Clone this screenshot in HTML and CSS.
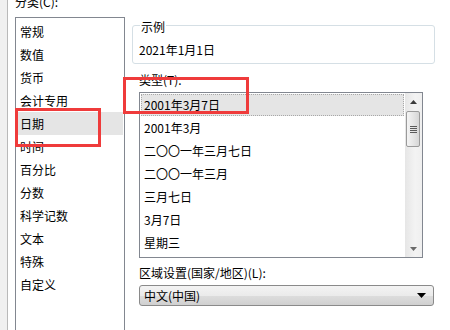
FILE: index.html
```html
<!DOCTYPE html>
<html lang="zh-CN">
<head>
<meta charset="utf-8">
<link rel="stylesheet" href="styles.css">
</head>
<body>
<div class="tab">
  <div class="left-col">
    <div class="cat-label">分类(C):</div>
    <div class="cat-list">
      <div class="cat-item">常规</div>
      <div class="cat-item">数值</div>
      <div class="cat-item">货币</div>
      <div class="cat-item">会计专用</div>
      <div class="cat-item selected">日期</div>
      <div class="cat-item">时间</div>
      <div class="cat-item">百分比</div>
      <div class="cat-item">分数</div>
      <div class="cat-item">科学记数</div>
      <div class="cat-item">文本</div>
      <div class="cat-item">特殊</div>
      <div class="cat-item">自定义</div>
    </div>
  </div>
  <div class="right-col">
    <div class="group">
      <span class="legend">示例</span>
      <div class="sample">2021年1月1日</div>
    </div>
    <div class="field-label">类型(T):</div>
    <div class="type-list">
      <div class="type-items">
        <div class="type-item selected">2001年3月7日</div>
        <div class="type-item">2001年3月</div>
        <div class="type-item">二〇〇一年三月七日</div>
        <div class="type-item">二〇〇一年三月</div>
        <div class="type-item">三月七日</div>
        <div class="type-item">3月7日</div>
        <div class="type-item">星期三</div>
      </div>
      <div class="scrollbar">
        <div class="sb-btn"><svg width="7" height="4" viewBox="0 0 7 4"><path d="M0 4 L3.5 0 L7 4 Z" fill="#3c3c3c"/></svg></div>
        <div class="sb-thumb">
          <span class="grip"></span><span class="grip"></span><span class="grip"></span><span class="grip"></span>
        </div>
        <div class="sb-track"></div>
        <div class="sb-btn"><svg width="7" height="4" viewBox="0 0 7 4"><path d="M0 0 L7 0 L3.5 4 Z" fill="#6a6a6a"/></svg></div>
      </div>
    </div>
    <div class="field-label region-label">区域设置(国家/地区)(L):</div>
    <div class="dropdown">
      <span>中文(中国)</span>
      <svg width="9" height="5" viewBox="0 0 9 5"><path d="M0 0 L9 0 L4.5 5 Z" fill="#000"/></svg>
    </div>
  </div>
  <div class="mark mark-cat"></div>
  <div class="mark mark-type"></div>
</div>
</body>
</html>
```

FILE: styles.css
```css
html, body {
  margin: 0;
  padding: 0;
}
body {
  width: 450px;
  height: 330px;
  overflow: hidden;
  background: #f0f0f0;
  font-family: "Noto Sans CJK SC", "Noto Sans", sans-serif;
  font-size: 12px;
  color: #000;
}
.tab {
  position: relative;
  margin-left: 7px;
  width: 435px;
  height: 330px;
  background: #fff;
  border-left: 1px solid #b9b9b9;
  border-right: 2px solid #8d8e96;
  display: flex;
  gap: 7px;
  padding-left: 7px;
  box-sizing: content-box;
}
.left-col {
  width: 110px;
  display: flex;
  flex-direction: column;
}
.cat-label {
  line-height: 16px;
  height: 16px;
  margin-top: -6px;
  margin-bottom: 7px;
}
.cat-list {
  flex: 1;
  border: 1px solid #828790;
  border-bottom: none;
  padding-top: 2px;
}
.cat-item {
  height: 23px;
  line-height: 23px;
  padding-left: 4px;
}
.cat-item.selected {
  background: #e5e5e5;
  margin-right: 1px;
}
.right-col {
  width: 303px;
  display: flex;
  flex-direction: column;
  padding-top: 25px;
}
.group {
  border: 1px solid #d5dfe5;
  border-radius: 3px;
  height: 37px;
  display: flex;
  flex-direction: column;
}
.legend {
  align-self: flex-start;
  margin-top: -7px;
  margin-left: 7px;
  padding: 0 1px;
  background: #fff;
  line-height: 16px;
  height: 16px;
}
.sample {
  margin-top: 7px;
  padding-left: 6px;
  line-height: 16px;
}
.field-label {
  margin-top: 8px;
  margin-left: 7px;
  line-height: 16px;
  height: 16px;
}
.type-list {
  margin-top: 4px;
  margin-left: 7px;
  width: 282px;
  height: 164px;
  border: 1px solid #828790;
  display: flex;
}
.type-items {
  flex: 1;
  padding: 0 1px;
}
.type-item {
  height: 23px;
  line-height: 23px;
  padding-left: 3px;
}
.type-item.selected {
  background: #e5e5e5;
  outline: 1px dotted #a8a8a8;
  outline-offset: -1px;
  margin-top: 1px;
  height: 22px;
  line-height: 21px;
}
.scrollbar {
  width: 17px;
  display: flex;
  flex-direction: column;
  background: linear-gradient(to right, #e6e6e6, #f3f3f3 60%, #efefef);
}
.sb-btn {
  height: 17px;
  display: flex;
  align-items: center;
  justify-content: center;
}
.sb-thumb {
  margin: 1px 2px 0 1px;
  height: 36px;
  box-sizing: border-box;
  border: 1px solid #9a9a9a;
  border-radius: 2px;
  background: linear-gradient(to right, #f4f4f4, #e6e6e6 50%, #d6d6d6);
  display: flex;
  flex-direction: column;
  align-items: center;
  justify-content: center;
  gap: 1px;
}
.grip {
  width: 7px;
  height: 1px;
  background: #5a5a5a;
}
.sb-track {
  flex: 1;
}
.region-label {
  margin-top: 7px;
}
.dropdown {
  margin-top: 4px;
  margin-left: 7px;
  width: 282px;
  height: 19px;
  border: 1px solid #8a8a8a;
  border-radius: 3px;
  background: linear-gradient(to bottom, #f3f3f3, #ebebeb 50%, #dddddd 51%, #d0d0d0);
  display: flex;
  align-items: center;
  justify-content: space-between;
  padding: 0 7px 0 4px;
  box-sizing: content-box;
  line-height: 19px;
}
.dropdown span {
  width: auto;
}
.mark {
  position: absolute;
  border: 3px solid #ef3b3b;
  box-sizing: border-box;
}
.mark-cat {
  left: 7px;
  top: 108px;
  width: 86px;
  height: 39px;
}
.mark-type {
  left: 115px;
  top: 77px;
  width: 126px;
  height: 37px;
}
```
